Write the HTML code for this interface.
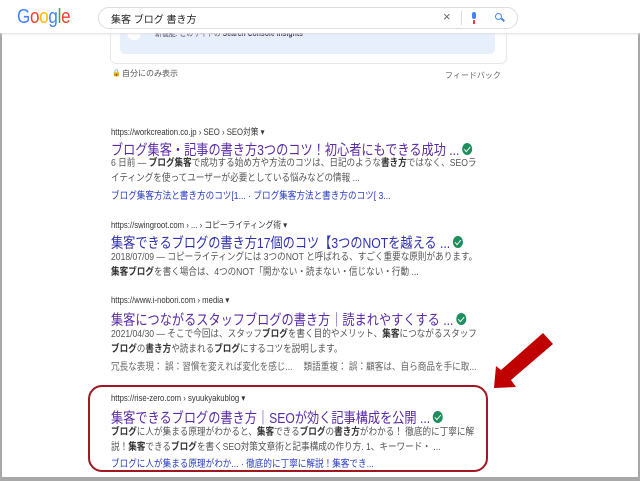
<!DOCTYPE html>
<html><head><meta charset="utf-8"><style>
*{margin:0;padding:0;box-sizing:border-box}
body{width:640px;height:481px;overflow:hidden;background:#fff;font-family:"Liberation Sans","Noto Sans CJK JP",sans-serif;position:relative}
.frame{position:absolute;left:0;top:0;width:640px;height:481px;border:2px solid #a8a8a8;border-bottom:4px solid #a8a8a8}
.a{position:absolute;white-space:nowrap}
.x{transform:scaleX(0.86);transform-origin:0 0}
.url{font-size:9px;color:#333}
.t{font-size:14.5px;color:#5a2aa8;transform:scaleX(0.84)}
.s{font-size:10px;color:#555;line-height:15px}
.s b{color:#333}
.sl{font-size:10px;color:#2a3cc4}
.ck{display:inline-block;width:12px;height:12px;border-radius:50%;background:#1e8e5e;vertical-align:0px;margin-left:3px;position:relative}
.ck:after{content:"";position:absolute;left:4px;top:2px;width:3px;height:6px;border:solid #fff;border-width:0 1.5px 1.5px 0;transform:rotate(45deg)}
</style></head><body>
<div class="a" style="left:110px;top:20px;width:397px;height:44px;border:1px solid #e8e8e8;border-radius:6px"></div>
<div class="a" style="left:120px;top:20px;width:375px;height:34px;background:#e8effc;border-radius:5px"></div>
<div class="a" style="left:127px;top:26px;width:14px;height:14px;background:#fff;border-radius:50%"></div>
<div class="a x" style="left:155px;top:28px;font-size:8px;color:#335">新機能: このサイトの <b>Search Console Insights</b></div>
<div class="a" style="left:0;top:0;width:640px;height:33px;background:#fff;box-shadow:0 1px 2px #ddd;z-index:2"></div>
<div class="a" style="left:17px;top:6px;font-size:20px;z-index:3;letter-spacing:-0.3px;transform:scaleX(0.85);transform-origin:0 0"><span style="color:#4285f4">G</span><span style="color:#ea4335">o</span><span style="color:#fbbc05">o</span><span style="color:#4285f4">g</span><span style="color:#34a853">l</span><span style="color:#ea4335">e</span></div>
<div class="a" style="left:98px;top:7px;width:420px;height:22px;border:1px solid #ddd;border-radius:11px;z-index:3;background:#fff"></div>
<div class="a" style="left:111px;top:11px;font-size:10px;color:#222;z-index:4">集客 ブログ 書き方</div>
<div class="a" style="left:443px;top:9px;font-size:13px;color:#666;z-index:4">×</div>
<div class="a" style="left:461px;top:11px;width:1px;height:14px;background:#ddd;z-index:4"></div>
<div class="a" style="left:472px;top:12px;width:4px;height:7px;background:#4285f4;border-radius:2px;z-index:4"></div>
<div class="a" style="left:473px;top:20px;width:2px;height:4px;background:#ea4335;z-index:4"></div>
<div class="a" style="left:495px;top:13px;width:7px;height:7px;border:1.5px solid #4285f4;border-radius:50%;z-index:4"></div>
<div class="a" style="left:501px;top:19px;width:4px;height:1.5px;background:#4285f4;transform:rotate(45deg);z-index:4"></div>
<div class="a" style="left:112px;top:69px;font-size:7px;color:#555">🔒</div>
<div class="a" style="left:122px;top:68px;font-size:8px;color:#555">自分にのみ表示</div>
<div class="a" style="left:445px;top:70px;font-size:8px;color:#666">フィードバック</div>

<div class="a url x" style="left:111px;top:125px">https://workcreation.co.jp › SEO › SEO対策 ▾</div>
<div class="a t x" style="left:111px;top:139px">ブログ集客・記事の書き方3つのコツ！初心者にもできる成功 ...<span class="ck"></span></div>
<div class="a s x" style="left:111px;top:156px">6 日前 — <b>ブログ集客</b>で成功する始め方や方法のコツは、日記のような<b>書き方</b>ではなく、SEOラ<br>イティングを使ってユーザーが必要としている悩みなどの情報 ...</div>
<div class="a sl x" style="left:111px;top:187px">ブログ集客方法と書き方のコツ[1... · ブログ集客方法と書き方のコツ[ 3...</div>

<div class="a url x" style="left:111px;top:218px">https://swingroot.com › ... › コピーライティング術 ▾</div>
<div class="a t x" style="left:111px;top:232px;color:#3030b0">集客できるブログの書き方17個のコツ【3つのNOTを越える ...<span class="ck"></span></div>
<div class="a s x" style="left:111px;top:250px">2018/07/09 — コピーライティングには 3つのNOT と呼ばれる、すごく重要な原則があります。<br><b>集客ブログ</b>を書く場合は、4つのNOT「開かない・読まない・信じない・行動 ...</div>

<div class="a url x" style="left:111px;top:295px">https://www.i-nobori.com › media ▾</div>
<div class="a t x" style="left:111px;top:309px">集客につながるスタッフブログの書き方｜読まれやすくする ...<span class="ck"></span></div>
<div class="a s x" style="left:111px;top:327px">2021/04/30 — そこで今回は、スタッフ<b>ブログ</b>を書く目的やメリット、<b>集客</b>につながるスタッフ<br><b>ブログ</b>の<b>書き方</b>や読まれる<b>ブログ</b>にするコツを説明します。</div>
<div class="a s x" style="left:111px;top:360px;color:#666">冗長な表現： 誤：習慣を変えれば変化を感じ...　 類語重複： 誤：顧客は、自ら商品を手に取...</div>

<div class="a" style="left:88px;top:385px;width:400px;height:87px;border:2px solid #a01722;border-radius:14px"></div>
<div class="a url x" style="left:111px;top:393px">https://rise-zero.com › syuukyakublog ▾</div>
<div class="a t x" style="left:111px;top:407px">集客できるブログの書き方｜SEOが効く記事構成を公開 ...<span class="ck"></span></div>
<div class="a s x" style="left:111px;top:425px"><b>ブログ</b>に人が集まる原理がわかると、<b>集客</b>できる<b>ブログ</b>の<b>書き方</b>がわかる！ 徹底的に丁寧に解<br>説！<b>集客</b>できる<b>ブログ</b>を書くSEO対策文章術と記事構成の作り方. 1、キーワード・ ...</div>
<div class="a sl x" style="left:111px;top:455px">ブログに人が集まる原理がわか... · 徹底的に丁寧に解説！集客でき...</div>

<svg class="a" style="left:0;top:0" width="640" height="481"><polygon points="494,388 496,366 501,370 543,333 553,344 511,380 516,387" fill="#c00000"/></svg>
<div class="frame"></div>
</body></html>
